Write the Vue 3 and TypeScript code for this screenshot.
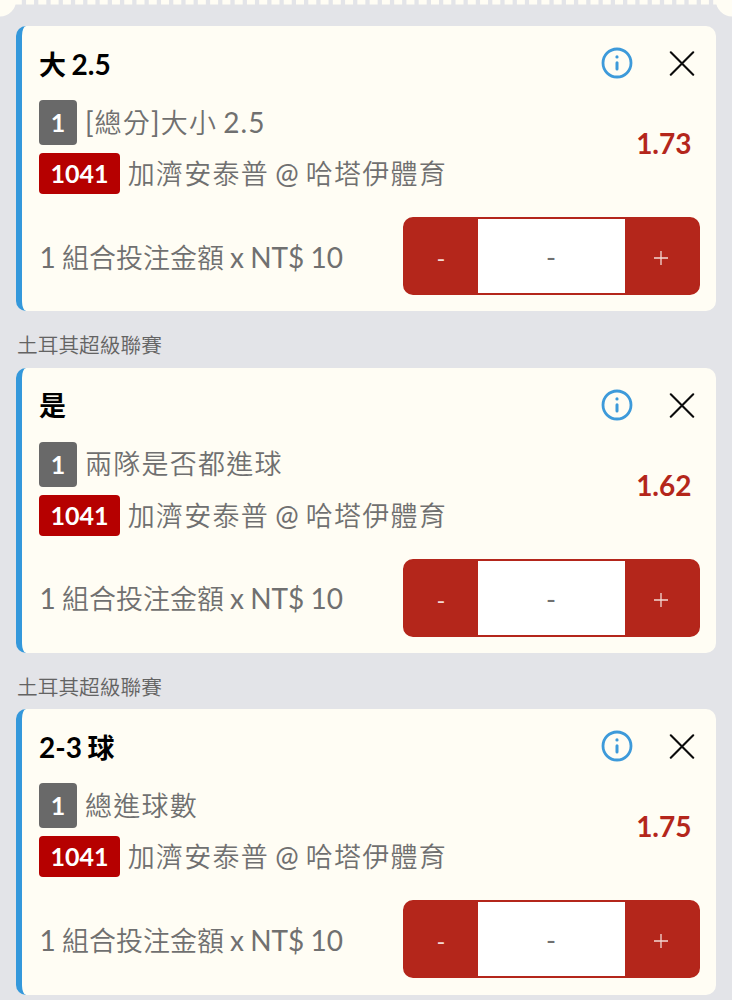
<script setup lang="ts">
interface Bet {
  id: number
  league: string
  pick: string
  market: string
  code: string
  match: string
  odds: string
}

interface Run {
  text: string
  latin: boolean
}

const match = '加濟安泰普 @ 哈塔伊體育'
const stake = '1 組合投注金額 x NT$ 10'
const bets: Bet[] = [
  { id: 1, league: '', pick: '大 2.5', market: '[總分]大小 2.5', code: '1041', match, odds: '1.73' },
  { id: 2, league: '土耳其超級聯賽', pick: '是', market: '兩隊是否都進球', code: '1041', match, odds: '1.62' },
  { id: 3, league: '土耳其超級聯賽', pick: '2-3 球', market: '總進球數', code: '1041', match, odds: '1.75' },
]

// Latin glyphs are set slightly larger than the Han glyphs beside them.
function runs(text: string): Run[] {
  return (text.match(/[\x20-\x7e]+|[^\x20-\x7e]+/g) ?? []).map((part) => ({
    text: part,
    latin: part.charCodeAt(0) < 127,
  }))
}
</script>

<template>
  <main class="slip">
    <div class="perforation">
      <svg width="732" height="18" viewBox="0 0 732 18">
        <line x1="13.8" y1="2.3" x2="718" y2="2.3" stroke="#fffdf4" stroke-width="4.6" stroke-dasharray="8 4.27" />
        <circle cx="0" cy="0.5" r="16" fill="#fffdf4" />
        <circle cx="732" cy="0.5" r="16" fill="#fffdf4" />
      </svg>
    </div>
    <section v-for="bet in bets" :key="bet.id" class="group">
      <h2 v-if="bet.league" class="league">{{ bet.league }}</h2>
      <article class="card">
        <header class="head">
          <h3 class="pick"><span v-for="(r, i) in runs(bet.pick)" :key="i" :class="{ latin: r.latin }">{{ r.text }}</span></h3>
          <button class="icon info" aria-label="info">
            <svg width="32" height="32" viewBox="0 0 32 32" fill="none" stroke="#3d9ada" stroke-linecap="round">
              <circle cx="16" cy="16" r="14" stroke-width="2.8" />
              <path d="M16 15.7V22" stroke-width="3" />
              <circle cx="16" cy="9.9" r="1.6" fill="#3d9ada" stroke="none" />
            </svg>
          </button>
          <button class="icon" aria-label="close">
            <svg width="26" height="26" viewBox="0 0 26 26" fill="none" stroke="#0b0b0b" stroke-width="2.1" stroke-linecap="round">
              <path d="M1.8 2.3L24.2 24.7M24.2 2.3L1.8 24.7" />
            </svg>
          </button>
        </header>
        <div class="body">
          <div class="lines">
            <div class="line">
              <span class="tag count">1</span>
              <span class="text"><span v-for="(r, i) in runs(bet.market)" :key="i" :class="{ latin: r.latin }">{{ r.text }}</span></span>
            </div>
            <div class="line second">
              <span class="tag code">{{ bet.code }}</span>
              <span class="text"><span v-for="(r, i) in runs(bet.match)" :key="i" :class="{ latin: r.latin }">{{ r.text }}</span></span>
            </div>
          </div>
          <strong class="odds">{{ bet.odds }}</strong>
        </div>
        <footer class="foot">
          <span class="stake"><span v-for="(r, i) in runs(stake)" :key="i" :class="{ latin: r.latin }">{{ r.text }}</span></span>
          <div class="stepper">
            <button class="step">-</button>
            <span class="value">-</span>
            <button class="step plus">
              <svg width="14" height="14" viewBox="0 0 14 14" stroke="#f3d9d4" stroke-width="1.3"><path d="M0 7H14M7 0V14" /></svg>
            </button>
          </div>
        </footer>
      </article>
    </section>
  </main>
</template>

<style>
html,
body {
  margin: 0;
  background: #e3e4e8;
  overflow: hidden;
}
</style>

<style scoped>
.slip {
  width: 732px;
  height: 1000px;
  overflow: hidden;
  box-sizing: border-box;
  background: #e3e4e8;
  font-family: Lato, "Noto Sans CJK TC DemiLight", "Noto Sans CJK TC", sans-serif;
  color: #707070;
}
.perforation {
  height: 26.2px;
}
.perforation svg {
  display: block;
}
.league {
  margin: 0;
  height: 56.4px;
  padding: 0 0 0 17px;
  box-sizing: border-box;
  font-size: 20.7px;
  font-weight: 350;
  line-height: 68px;
  color: #636363;
}
.card {
  box-sizing: border-box;
  width: 700px;
  height: 285.2px;
  margin-left: 16px;
  padding: 0 16.5px 0 16.5px;
  border-left: 6.5px solid #3498db;
  border-radius: 10px;
  background: #fffdf4;
}
.head {
  display: flex;
  align-items: center;
  height: 74px;
}
.pick {
  flex: 1;
  margin: 3px 0 0;
  padding-left: 0.5px;
  font-family: Lato, "Noto Sans CJK TC", sans-serif;
  font-size: 27px;
  line-height: 40px;
  font-weight: 700;
  word-spacing: -1.2px;
  color: #000;
}
.latin {
  font-size: 28px;
}
.icon {
  display: flex;
  margin: 0 4.5px 0 0;
  padding: 0;
  border: 0;
  background: none;
}
.icon.info {
  margin: 0 36px 0 0;
}
.body {
  display: flex;
  height: 94px;
}
.lines {
  flex: 1;
}
.line {
  display: flex;
  align-items: center;
  height: 45px;
}
.line.second {
  height: 41px;
  margin-top: 8px;
}
.tag {
  box-sizing: border-box;
  margin-right: 8px;
  padding-left: 0.5px;
  border-radius: 4px;
  color: #fff;
  font-weight: 700;
  font-size: 25px;
  text-align: center;
}
.count {
  width: 38.5px;
  height: 45px;
  line-height: 45px;
  background: #696969;
}
.code {
  width: 81.3px;
  height: 41px;
  line-height: 41px;
  background: #b60000;
}
.text {
  font-size: 27px;
  font-weight: 350;
  line-height: 40px;
  letter-spacing: 1.25px;
  word-spacing: -2px;
  white-space: nowrap;
}
.text .latin {
  font-weight: 400;
  letter-spacing: 1px;
}
.odds {
  margin: 23px 8px 0 0;
  font-size: 28px;
  line-height: 40px;
  color: #b4261b;
}
.foot {
  display: flex;
  align-items: center;
  justify-content: space-between;
  height: 78px;
  margin-top: 23px;
}
.stake {
  padding: 2px 0 0 1px;
  font-size: 27px;
  line-height: 40px;
  font-weight: 350;
  word-spacing: -1px;
  white-space: nowrap;
}
.stake .latin {
  font-weight: 400;
}
.stepper {
  display: flex;
  box-sizing: border-box;
  width: 297px;
  height: 78px;
  border: 2px solid #b4261b;
  border-radius: 10px;
  overflow: hidden;
  background: #b4261b;
}
.step {
  display: flex;
  flex: 1;
  align-items: center;
  justify-content: center;
  padding: 3px 0 0;
  border: 0;
  background: #b4261b;
  color: #f3d9d4;
  font: 400 24px Lato, sans-serif;
}
.plus {
  padding-top: 4px;
}
.value {
  width: 147px;
  background: #fff;
  text-align: center;
  font-size: 27px;
  line-height: 75px;
}
</style>
